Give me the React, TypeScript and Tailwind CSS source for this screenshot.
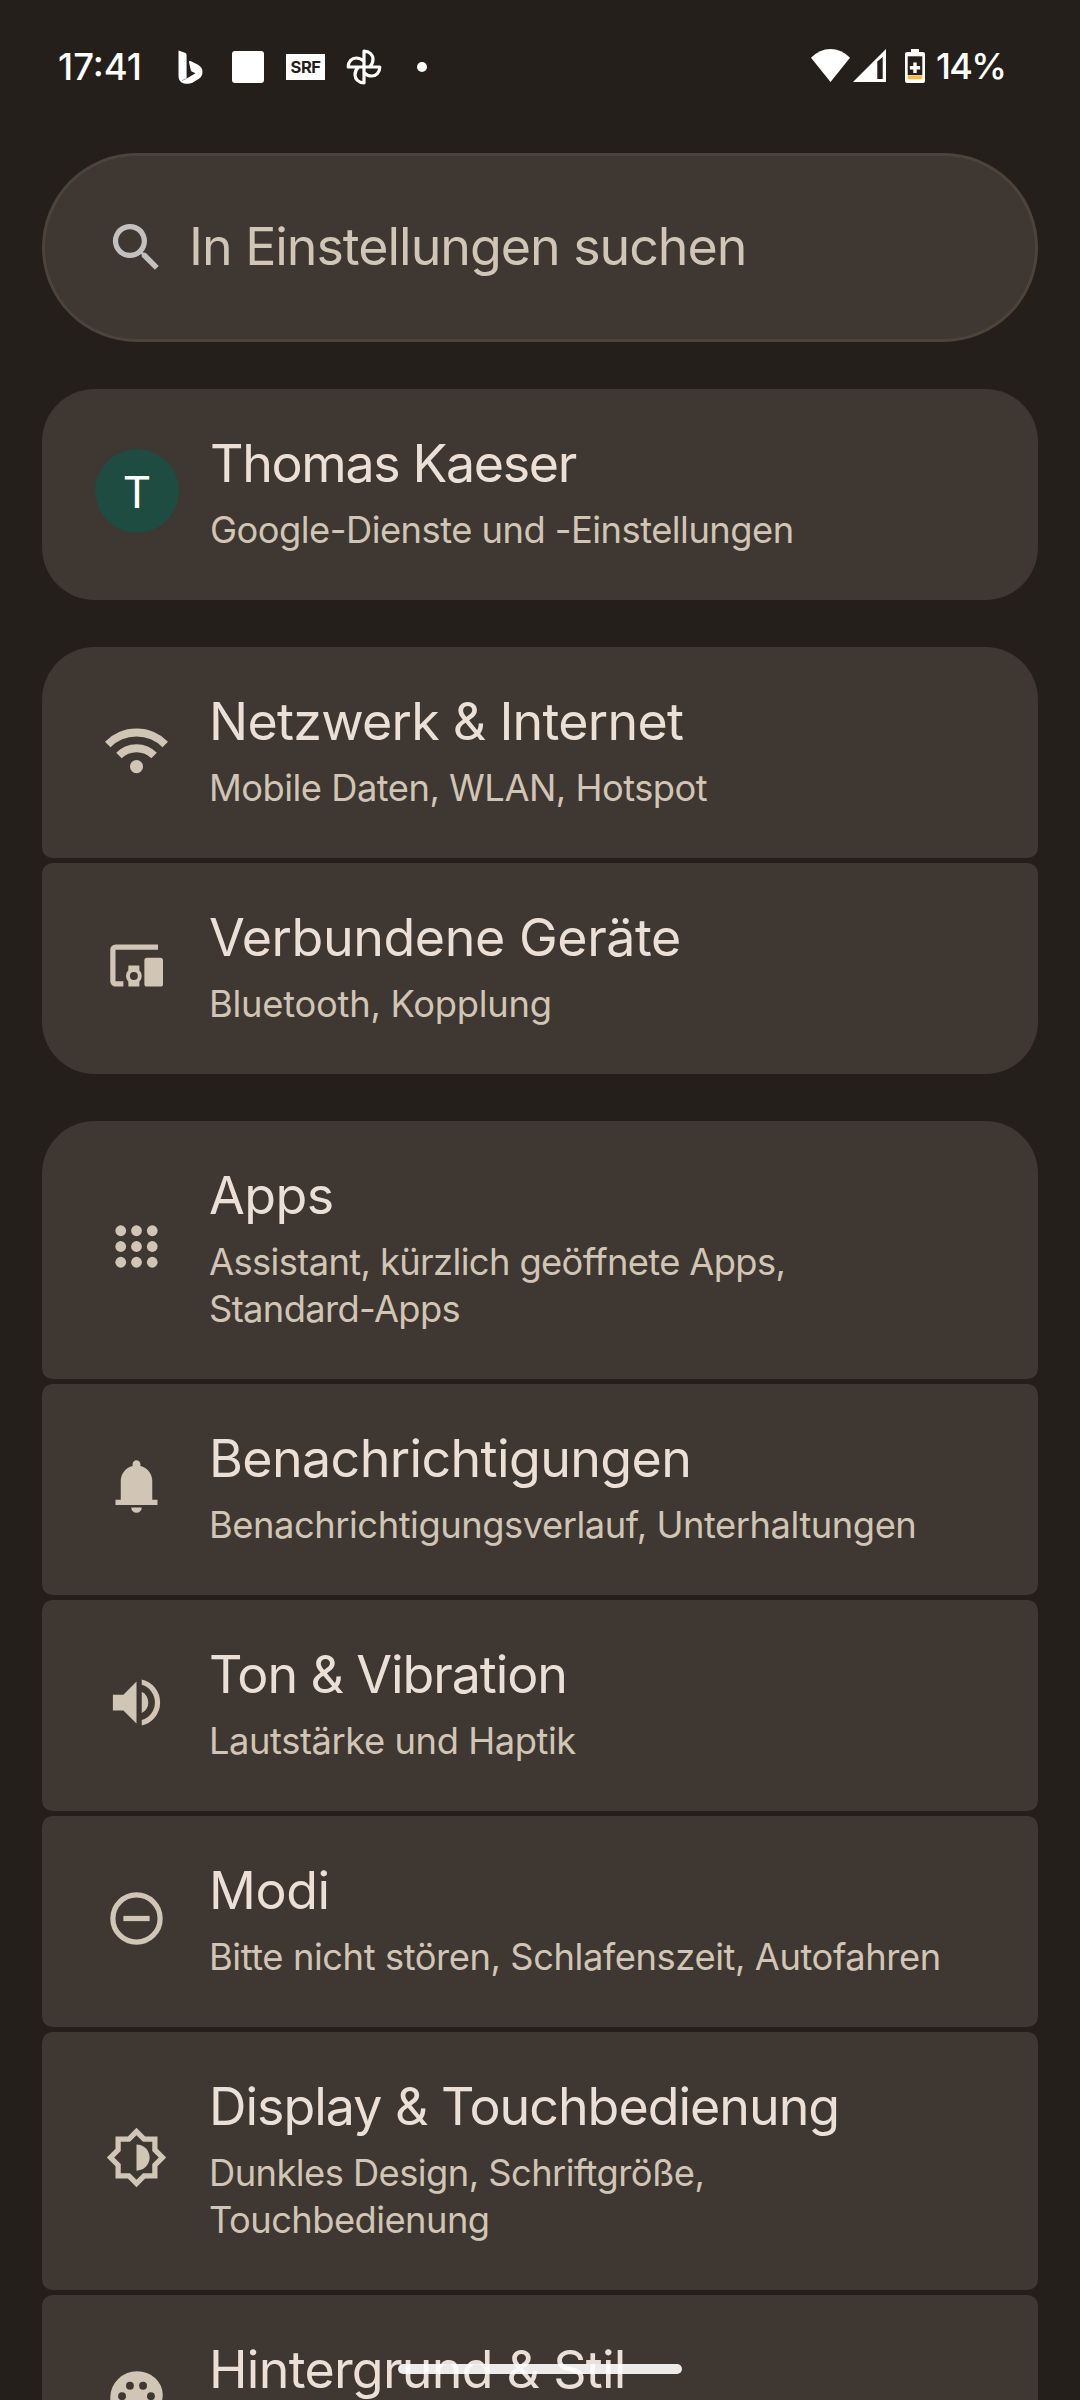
import type { ReactNode } from 'react';

type Item = {
  title: string;
  titleClass: string;
  lines: string[];
  subClass: string;
  icon: ReactNode;
};

const iconClass = 'size-[63px] shrink-0 fill-[#d1c5b5]';

const WifiIcon = () => (
  <svg viewBox="0 -960 960 960" className={iconClass}>
    <path d="M480-120q-42 0-71-29t-29-71q0-42 29-71t71-29q42 0 71 29t29 71q0 42-29 71t-71 29ZM254-346l-84-86q59-59 138.5-93.5T480-560q92 0 171.5 35T790-430l-84 84q-44-44-102-69t-124-25q-66 0-124 25t-102 69ZM84-516 0-600q92-94 215-147t265-53q142 0 265 53t215 147l-84 84q-77-77-178.5-120.5T480-680q-116 0-217.5 43.5T84-516Z" />
  </svg>
);

const DevicesIcon = () => (
  <svg viewBox="0 0 24 24" className={iconClass}>
    <path d="M4 20q-.825 0-1.412-.587T2 18V6q0-.825.588-1.412T4 4h16.2v2H4v12h3v2z" />
    <path
      fillRule="evenodd"
      d="M8.900 20v-1.800Q8 17.300 8 16t.9-2.200V12h4.200v1.800Q14 14.700 14 16t-.9 2.200V20zM11 17.500a1.500 1.500 0 1 0 0-3 1.500 1.500 0 0 0 0 3z"
    />
    <rect x="15" y="9" width="7.100" height="11" rx="1" />
  </svg>
);

const AppsIcon = () => (
  <svg viewBox="0 0 24 24" className={iconClass}>
    {[6, 12, 18].map((y) => [6, 12, 18].map((x) => <circle key={`${x}-${y}`} cx={x} cy={y} r="2.05" />))}
  </svg>
);

const BellIcon = () => (
  <svg viewBox="0 0 24 24" className={iconClass}>
    <path d="M4 19v-2h2v-7q0-2.075 1.250-3.687T10.500 4.200v-.7q0-.625.438-1.062T12 2t1.063.438T13.500 3.500v.7q2 .5 3.250 2.113T18 10v7h2v2zm8 3q-.825 0-1.412-.587T10 20h4q0 .825-.587 1.413T12 22" />
  </svg>
);

const SoundIcon = () => (
  <svg viewBox="0 0 24 24" className={iconClass}>
    <path d="M14 20.725v-2.050q2.250-.65 3.625-2.500t1.375-4.200-1.375-4.200T14 5.275v-2.050q3.100.7 5.050 3.138T21 11.975t-1.950 5.613T14 20.725M3 15V9h4l5-5v16l-5-5zm11 1V7.950q1.175.55 1.838 1.650T16.500 12q0 1.275-.663 2.363T14 16" />
  </svg>
);

const ModesIcon = () => (
  <svg viewBox="0 0 24 24" className={iconClass}>
    <circle cx="12" cy="12" r="9" fill="none" stroke="#d1c5b5" strokeWidth="2" />
    <rect x="7" y="11" width="10" height="2" />
  </svg>
);

const DisplayIcon = () => (
  <svg viewBox="0 0 24 24" className={iconClass}>
    <path
      fillRule="evenodd"
      d="M20 8.690V4h-4.690L12 .69 8.690 4H4v4.690L.69 12 4 15.310V20h4.690L12 23.310 15.310 20H20v-4.690L23.310 12zm-2 5.790V18h-3.520L12 20.480 9.520 18H6v-3.520L3.520 12 6 9.520V6h3.520L12 3.520 14.480 6H18v3.520L20.480 12z"
    />
    <path d="M12 7v10c2.760 0 5-2.240 5-5s-2.240-5-5-5" />
  </svg>
);

const PaletteIcon = () => (
  <svg viewBox="0 0 24 24" className={iconClass}>
    <path d="M12 22q-2.050 0-3.875-.788t-3.187-2.150-2.150-3.187T2 12q0-2.075.813-3.900t2.200-3.175T8.250 2.788 12.200 2q2 0 3.775.688t3.113 1.900 2.125 2.875T22 11.050q0 2.875-1.750 4.413T16 17h-1.850q-.225 0-.312.125t-.088.275q0 .3.375.863t.375 1.287q0 1.250-.687 1.850T12 22" />
    <g className="fill-[#3f3731]">
      <circle cx="6.500" cy="11.500" r="1.500" />
      <circle cx="9.500" cy="7.500" r="1.500" />
      <circle cx="14.500" cy="7.500" r="1.500" />
      <circle cx="17.500" cy="11.500" r="1.500" />
    </g>
  </svg>
);

const Avatar = () => (
  <div className="-mx-[10px] flex size-[84px] shrink-0 items-center justify-center rounded-full bg-[#1f4c41] pt-[2px] text-[44px] leading-none text-white">
    T
  </div>
);

const groups: Item[][] = [
  [
    {
      title: 'Thomas Kaeser',
      titleClass: 'tracking-[-1.34px]',
      lines: ['Google-Dienste und -Einstellungen'],
      subClass: 'tracking-[-0.51px]',
      icon: <Avatar />,
    },
  ],
  [
    {
      title: 'Netzwerk & Internet',
      titleClass: 'tracking-[-0.71px]',
      lines: ['Mobile Daten, WLAN, Hotspot'],
      subClass: 'tracking-[-0.5px]',
      icon: <WifiIcon />,
    },
    {
      title: 'Verbundene Geräte',
      titleClass: 'tracking-[-0.4px]',
      lines: ['Bluetooth, Kopplung'],
      subClass: 'tracking-[-0.24px]',
      icon: <DevicesIcon />,
    },
  ],
  [
    {
      title: 'Apps',
      titleClass: 'tracking-[-0.5px]',
      lines: ['Assistant, kürzlich geöffnete Apps,', 'Standard-Apps'],
      subClass: 'tracking-[-0.62px]',
      icon: <AppsIcon />,
    },
    {
      title: 'Benachrichtigungen',
      titleClass: 'tracking-[-0.6px]',
      lines: ['Benachrichtigungsverlauf, Unterhaltungen'],
      subClass: 'tracking-[-0.45px]',
      icon: <BellIcon />,
    },
    {
      title: 'Ton & Vibration',
      titleClass: 'tracking-[-1.08px]',
      lines: ['Lautstärke und Haptik'],
      subClass: 'tracking-[-0.42px]',
      icon: <SoundIcon />,
    },
    {
      title: 'Modi',
      titleClass: 'tracking-[-0.4px]',
      lines: ['Bitte nicht stören, Schlafenszeit, Autofahren'],
      subClass: 'tracking-[-0.42px]',
      icon: <ModesIcon />,
    },
    {
      title: 'Display & Touchbedienung',
      titleClass: 'tracking-[-0.99px]',
      lines: ['Dunkles Design, Schriftgröße,', 'Touchbedienung'],
      subClass: 'tracking-[-0.55px]',
      icon: <DisplayIcon />,
    },
    {
      title: 'Hintergrund & Stil',
      titleClass: 'tracking-[-0.72px]',
      lines: [],
      subClass: '',
      icon: <PaletteIcon />,
    },
  ],
];

function Row({ item }: { item: Item }) {
  return (
    <li className="flex items-center gap-[42px] rounded-[10.5px] bg-[#3f3731] pt-[41px] pr-[42px] pb-[48px] pl-[63px] first:rounded-t-[52.5px] last:rounded-b-[52.5px]">
      {item.icon}
      <div className="-mb-[2px] -ml-px pt-[2px] whitespace-nowrap">
        <h2 className={`text-[51.9px] leading-[64px] text-[#ece0d6] ${item.titleClass}`}>{item.title}</h2>
        <p className={`mt-[11px] min-h-[47px] text-[36.3px] leading-[47px] text-[#d1c5b5] ${item.subClass}`}>
          {item.lines.map((line) => (
            <span key={line} className="block">
              {line}
            </span>
          ))}
        </p>
      </div>
    </li>
  );
}

function StatusBar() {
  const petal = 'M18 18V2.200c5.600 0 9 3.700 9 8.100 0 3-1.300 5.600-3.400 7.700';
  return (
    <header className="flex h-[131px] items-center leading-none font-medium text-white">
      <div className="w-[178px] pt-[3px] pl-[58px] text-[36.5px]">17:41</div>
      <div className="flex items-center pt-[3px]">
        <svg viewBox="0 0 25 34" className="h-[34px] w-[25px] fill-white">
          <path d="M.5.5 7 2.800Q8.600 3.400 8.600 5V28.500L17.500 23.300 14.200 21.700Q13.200 21.200 12.800 20.200L11 12.200Q10.900 10.500 12.500 11L20 14.800Q24.500 17.300 24.500 22 24.500 26.500 20.500 29L14.500 32.700Q11 34.500 6 33.500.5 31.800.5 26z" />
          <path d="M4 30.500 9 28.400" stroke="#a9a6a3" strokeWidth="1" />
        </svg>
        <div className="ml-[29px] h-[32px] w-[32px] rounded-[3px] bg-white" />
        <div className="ml-[22px] flex h-[26px] w-[39px] items-center justify-center bg-white text-[16.5px] font-bold tracking-[-0.5px] text-[#241f1a]">
          SRF
        </div>
        <svg viewBox="0 0 36 36" className="ml-[21px] size-[36px] fill-none stroke-white" strokeWidth="3.200" strokeLinejoin="round">
          <path d={petal} />
          <path d={petal} transform="rotate(90 18 18)" />
          <path d={petal} transform="rotate(180 18 18)" />
          <path d={petal} transform="rotate(270 18 18)" />
        </svg>
        <div className="ml-[35px] size-[10px] rounded-full bg-white" />
      </div>
      <svg viewBox="0 0 39 33" className="ml-auto h-[33px] w-[39px] fill-white">
        <path d="M19.500 33 0 8.800Q8.500 0 19.500 0T39 8.800z" />
      </svg>
      <svg viewBox="0 0 33 33" className="ml-[3px] h-[33px] w-[33px] fill-white">
        <path fillRule="evenodd" d="M0 33 33 0V33zM24.300 12.500V30H29.700V8z" />
      </svg>
      <svg viewBox="0 0 20 34" className="ml-[19px] h-[34px] w-[20px]">
        <path className="fill-white" d="M6 0h8v3h4q2 0 2 2v27q0 2-2 2H2q-2 0-2-2V5q0-2 2-2h4z" />
        <path className="fill-[#241f1a]" d="M2.700 7.300h14.600v18.700H2.700z" />
        <path className="fill-[#f5bd48]" d="M2.700 26.200h14.600v4.100H2.700z" />
        <path className="fill-white" d="M8.300 13.500h3.400v3.500h3.400v3.400h-3.400v3.500H8.300v-3.500H4.900v-3.400h3.400z" />
      </svg>
      <div className="w-[155px] pt-[1px] pl-[11px] text-[36px] tracking-[-1.7px]">14%</div>
    </header>
  );
}

export default function App() {
  return (
    <div className="relative h-[2400px] w-[1080px] overflow-hidden bg-[#241f1a] font-['Inter',sans-serif]">
      <StatusBar />
      <main className="mt-[22px] flex flex-col gap-[47px] px-[42px]">
        <div className="flex h-[189px] items-center gap-[21px] rounded-full border-[3px] border-[#4c443a] bg-[#3f3731] pl-[60px]">
          <svg viewBox="0 0 24 24" className="size-[63px] fill-[#c1c2c0]">
            <path d="M15.500 14h-.79l-.28-.27A6.470 6.470 0 0 0 16 9.500 6.500 6.500 0 1 0 9.500 16c1.610 0 3.090-.59 4.230-1.570l.27.28v.79l5 4.990L20.490 19zm-6 0C7.010 14 5 11.990 5 9.500S7.010 5 9.500 5 14 7.010 14 9.500 11.990 14 9.500 14" />
          </svg>
          <span className="pb-[2px] text-[51.9px] leading-[64px] tracking-[-1.02px] whitespace-nowrap text-[#d1c5b5]">
            In Einstellungen suchen
          </span>
        </div>
        {groups.map((group) => (
          <ul key={group[0].title} className="flex flex-col gap-[5px]">
            {group.map((item) => (
              <Row key={item.title} item={item} />
            ))}
          </ul>
        ))}
      </main>
      <div className="absolute top-[2364px] left-[398px] h-[10px] w-[284px] rounded-full bg-white/90" />
    </div>
  );
}
